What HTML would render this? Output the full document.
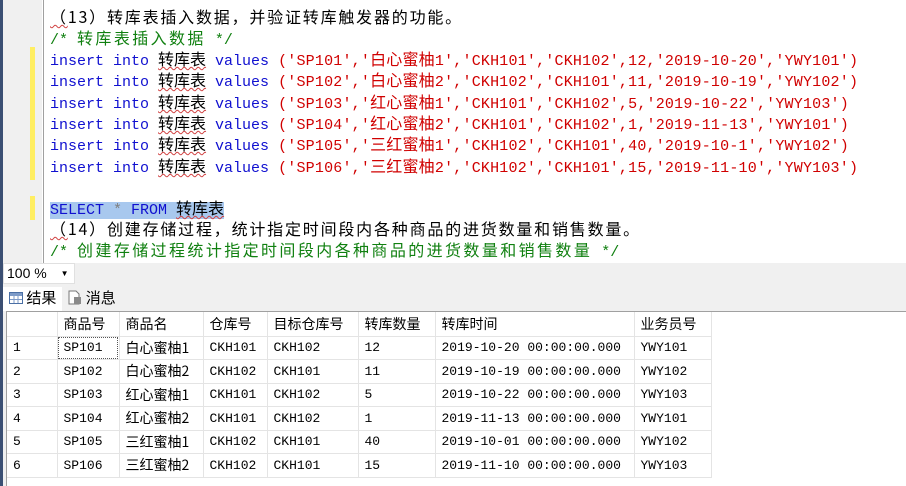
<!DOCTYPE html>
<html><head><meta charset="utf-8"><style>
*{margin:0;padding:0;box-sizing:border-box}
body{width:906px;height:486px;overflow:hidden;background:#f0f0f0;position:relative;font-family:"Liberation Mono","Noto Sans CJK SC",monospace}
.lstrip{position:absolute;left:0;top:0;width:3px;height:486px;background:#3b4f73}
.ed{position:absolute;left:3px;top:0;width:903px;height:263px;background:#fff}
.gut{position:absolute;left:0;top:0;width:39px;height:263px;background:#f0f0f0}
.vl{position:absolute;left:40px;top:0;width:1px;height:263px;background:#a0a0a0}
.ym{position:absolute;left:27px;width:5px;background:#ffee62}
.ln{position:absolute;left:47px;font-size:15px;line-height:21px;white-space:pre;color:#000}
.c{font-family:"Noto Sans CJK SC",sans-serif;font-size:16px}
.w{font-family:"Noto Sans CJK SC",sans-serif;font-size:16px;letter-spacing:1.8px}
.w2{font-family:"Noto Sans CJK SC",sans-serif;font-size:16px;letter-spacing:2.4px}
.b{color:#1010d0}.r{color:#d00000;letter-spacing:0.2px}.g{color:#108010}
.sq{text-decoration:underline wavy #d04040;text-decoration-thickness:1px}
.sel{background:#a8c8ee}
.zb{position:absolute;left:3px;top:263px;width:72px;height:21px;background:#fff;border:1px solid #e0e0e0;font:14px "Liberation Sans",sans-serif;padding:1px 3px;white-space:nowrap}
.tabs{position:absolute;left:3px;top:287px;font:15px "Noto Sans CJK SC",sans-serif;white-space:nowrap}
.grid{position:absolute;left:6px;top:311px;width:900px;height:175px;background:#fff;border-left:1px solid #a0a0a0;border-top:1px solid #a0a0a0}
table{border-collapse:collapse;font-family:"Liberation Mono","Noto Sans CJK SC",monospace;font-size:13px}
td{border-right:1px solid #e4e4e4;border-bottom:1px solid #e4e4e4;height:23.5px;padding:0 0 0 6px;white-space:nowrap}
tr.h td{font-family:"Noto Sans CJK SC",sans-serif;font-size:14px;height:24px}
.cj{font-family:"Noto Sans CJK SC",sans-serif;font-size:14px}
</style></head><body>
<div class="lstrip"></div>
<div class="ed">
<div class="gut"></div><div class="vl"></div>
<div class="ym" style="top:47px;height:133px"></div>
<div class="ym" style="top:196px;height:24px"></div>
<div class="ln" style="top:6px"><span class="w sq">（</span><span class="w">13）转库表插入数据，并验证转库触发器的功能。</span></div>
<div class="ln g" style="top:27px">/* <span class="w2">转库表插入数据</span> */</div>
<div class="ln" style="top:48px"><span class="b">insert into </span><span class="c sq">转库表</span><span class="b"> values </span><span class="r">('SP101','<span class="c">白心蜜柚</span>1','CKH101','CKH102',12,'2019-10-20','YWY101')</span></div>
<div class="ln" style="top:69px"><span class="b">insert into </span><span class="c sq">转库表</span><span class="b"> values </span><span class="r">('SP102','<span class="c">白心蜜柚</span>2','CKH102','CKH101',11,'2019-10-19','YWY102')</span></div>
<div class="ln" style="top:91px"><span class="b">insert into </span><span class="c sq">转库表</span><span class="b"> values </span><span class="r">('SP103','<span class="c">红心蜜柚</span>1','CKH101','CKH102',5,'2019-10-22','YWY103')</span></div>
<div class="ln" style="top:112px"><span class="b">insert into </span><span class="c sq">转库表</span><span class="b"> values </span><span class="r">('SP104','<span class="c">红心蜜柚</span>2','CKH101','CKH102',1,'2019-11-13','YWY101')</span></div>
<div class="ln" style="top:133px"><span class="b">insert into </span><span class="c sq">转库表</span><span class="b"> values </span><span class="r">('SP105','<span class="c">三红蜜柚</span>1','CKH102','CKH101',40,'2019-10-1','YWY102')</span></div>
<div class="ln" style="top:155px"><span class="b">insert into </span><span class="c sq">转库表</span><span class="b"> values </span><span class="r">('SP106','<span class="c">三红蜜柚</span>2','CKH102','CKH101',15,'2019-11-10','YWY103')</span></div>
<div class="ln" style="top:197px"><span class="sel"><span class="b">SELECT </span><span style="color:#808080">*</span><span class="b"> FROM </span><span class="c sq">转库表</span></span></div>
<div class="ln" style="top:218px"><span class="w sq">（</span><span class="w">14）创建存储过程，统计指定时间段内各种商品的进货数量和销售数量。</span></div>
<div class="ln g" style="top:239px">/* <span class="w2">创建存储过程统计指定时间段内各种商品的进货数量和销售数量</span> */</div>
</div>
<div class="zb">100 % <span style="font-size:8px;margin-left:10px;vertical-align:2px">▼</span></div>
<div class="tabs">
<span style="display:inline-block;background:#fff;padding:0 6px 0 6px;height:24px;line-height:22px"><svg width="14" height="12" style="vertical-align:-1px"><rect x="0.5" y="0.5" width="13" height="11" fill="#fff" stroke="#4a6fa5"/><rect x="1" y="1" width="12" height="3" fill="#7d9bc8"/><path d="M1 7.5H13M5 4V11M9 4V11" stroke="#7d9bc8"/></svg> 结果</span><span style="display:inline-block;padding:0 6px;height:24px;line-height:22px"><svg width="14" height="15" style="vertical-align:-2px"><path d="M1 1H8L11 4V14H1Z" fill="#fff" stroke="#777"/><rect x="6" y="7" width="7" height="7" fill="#8a8a8a"/></svg> 消息</span>
</div>
<div class="grid">
<table>
<tr class="h"><td style="width:50px"></td><td style="width:62px">商品号</td><td style="width:84px">商品名</td><td style="width:64px">仓库号</td><td style="width:91px">目标仓库号</td><td style="width:77px">转库数量</td><td style="width:199px">转库时间</td><td style="width:77px">业务员号</td></tr>
<tr><td>1</td><td style="outline:1px dotted #555;outline-offset:-2px">SP101</td><td class="cj">白心蜜柚1</td><td>CKH101</td><td>CKH102</td><td>12</td><td>2019-10-20 00:00:00.000</td><td>YWY101</td></tr>
<tr><td>2</td><td>SP102</td><td class="cj">白心蜜柚2</td><td>CKH102</td><td>CKH101</td><td>11</td><td>2019-10-19 00:00:00.000</td><td>YWY102</td></tr>
<tr><td>3</td><td>SP103</td><td class="cj">红心蜜柚1</td><td>CKH101</td><td>CKH102</td><td>5</td><td>2019-10-22 00:00:00.000</td><td>YWY103</td></tr>
<tr><td>4</td><td>SP104</td><td class="cj">红心蜜柚2</td><td>CKH101</td><td>CKH102</td><td>1</td><td>2019-11-13 00:00:00.000</td><td>YWY101</td></tr>
<tr><td>5</td><td>SP105</td><td class="cj">三红蜜柚1</td><td>CKH102</td><td>CKH101</td><td>40</td><td>2019-10-01 00:00:00.000</td><td>YWY102</td></tr>
<tr><td>6</td><td>SP106</td><td class="cj">三红蜜柚2</td><td>CKH102</td><td>CKH101</td><td>15</td><td>2019-11-10 00:00:00.000</td><td>YWY103</td></tr>
</table>
</div>
</body></html>
